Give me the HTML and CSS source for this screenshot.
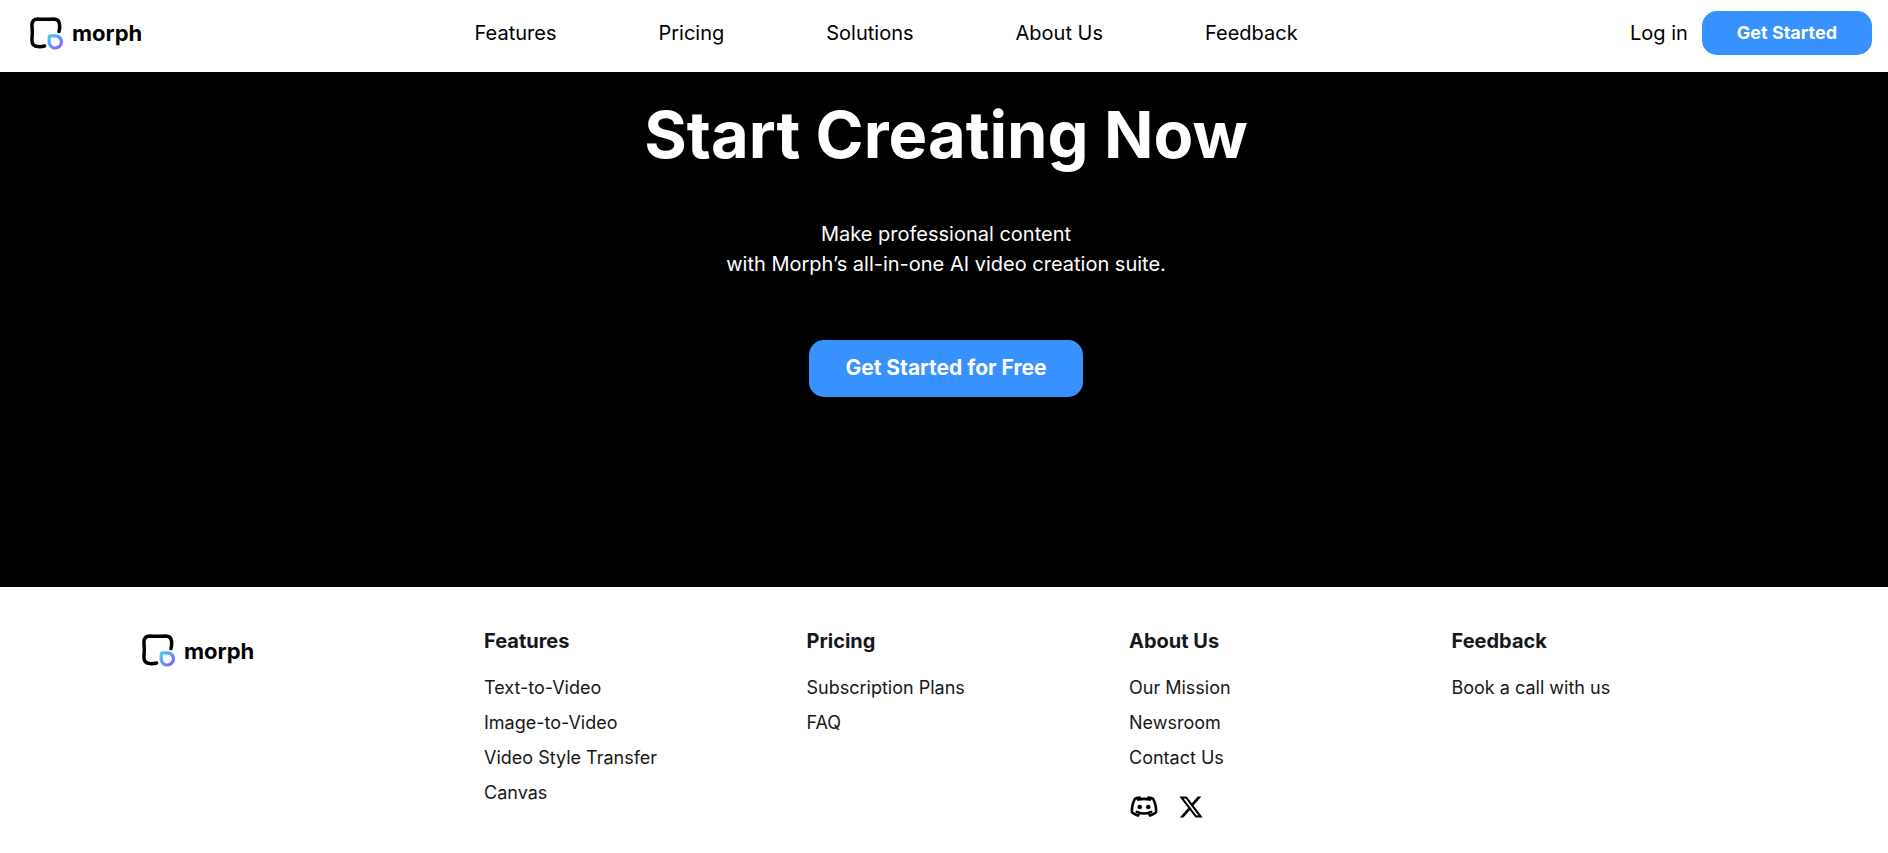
FILE: index.html
```html
<!DOCTYPE html>
<html lang="en">
<head>
<meta charset="utf-8">
<meta name="viewport" content="width=device-width, initial-scale=1">
<title>Morph</title>
<link rel="stylesheet" href="styles.css">
</head>
<body>
<header class="header">
  <a class="logo" href="#">
    <svg class="logo-mark" viewBox="0 0 33 33" aria-hidden="true">
      <defs>
        <linearGradient id="drop" x1="0" y1="0" x2="1" y2="1">
          <stop offset="0" stop-color="#3ccbff"/>
          <stop offset="1" stop-color="#8a5cff"/>
        </linearGradient>
      </defs>
      <path d="M29 14.5C30 11.5 29.8 9.5 29.6 7.5C29.3 3.6 27.4 1.9 23.5 1.9C18 2.3 13 2.3 8 1.9C3.9 1.9 2 3.8 1.9 8C2.500 13 2.500 18 1.9 23C2 27.3 4 29.6 8 29.6C10.500 29.800 12.500 29.600 14.500 29" fill="none" stroke="#000" stroke-width="3.500" stroke-linecap="round"/>
      <path d="M19.200 20.500Q19.200 18.800 21 18.800H25.200A6.100 6.100 0 1 1 19.200 25Z" fill="none" stroke="url(#drop)" stroke-width="3.200"/>
    </svg>
    <span>morph</span>
  </a>
  <nav class="nav">
    <a href="#">Features</a>
    <a href="#">Pricing</a>
    <a href="#">Solutions</a>
    <a href="#">About Us</a>
    <a href="#">Feedback</a>
  </nav>
  <div class="account">
    <a href="#">Log in</a>
    <button class="btn" type="button">Get Started</button>
  </div>
</header>
<main class="hero">
  <h1>Start Creating Now</h1>
  <p>Make professional content<br>with Morph’s all-in-one AI video creation suite.</p>
  <button class="btn btn-large" type="button">Get Started for Free</button>
</main>
<footer class="footer">
  <div>
    <a class="logo" href="#">
      <svg class="logo-mark" viewBox="0 0 33 33" aria-hidden="true">
        <path d="M29 14.5C30 11.5 29.8 9.5 29.6 7.5C29.3 3.6 27.4 1.9 23.5 1.9C18 2.3 13 2.3 8 1.9C3.9 1.9 2 3.8 1.9 8C2.500 13 2.500 18 1.9 23C2 27.3 4 29.6 8 29.6C10.500 29.800 12.500 29.600 14.500 29" fill="none" stroke="#000" stroke-width="3.500" stroke-linecap="round"/>
        <path d="M19.200 20.500Q19.200 18.800 21 18.800H25.200A6.100 6.100 0 1 1 19.200 25Z" fill="none" stroke="url(#drop)" stroke-width="3.200"/>
      </svg>
      <span>morph</span>
    </a>
  </div>
  <section>
    <h2>Features</h2>
    <ul>
      <li><a href="#">Text-to-Video</a></li>
      <li><a href="#">Image-to-Video</a></li>
      <li><a href="#">Video Style Transfer</a></li>
      <li><a href="#">Canvas</a></li>
    </ul>
  </section>
  <section>
    <h2>Pricing</h2>
    <ul>
      <li><a href="#">Subscription Plans</a></li>
      <li><a href="#">FAQ</a></li>
    </ul>
  </section>
  <section>
    <h2>About Us</h2>
    <ul>
      <li><a href="#">Our Mission</a></li>
      <li><a href="#">Newsroom</a></li>
      <li><a href="#">Contact Us</a></li>
    </ul>
    <div class="social">
      <a href="#" aria-label="Discord">
        <svg class="discord" viewBox="0 0 28 22" aria-hidden="true">
          <path d="M10.500 2.800L9.500 1.500C7.800 1.700 6.200 2.200 4.800 3C2.700 7 1.700 11.500 1.900 16.300C3.700 17.900 5.700 19 7.900 19.600L9.400 16.800M17.500 2.800L18.500 1.500C20.200 1.700 21.800 2.200 23.200 3C25.300 7 26.300 11.500 26.100 16.300C24.300 17.900 22.300 19 20.100 19.600L18.600 16.800M8.200 3.600C12 2.700 16 2.700 19.800 3.600M6.800 15.800C11.300 18 16.700 18 21.200 15.800" fill="none" stroke="#000" stroke-width="2.600" stroke-linecap="round" stroke-linejoin="round"/>
          <circle cx="9.700" cy="11" r="2.300"/>
          <circle cx="18.300" cy="11" r="2.300"/>
        </svg>
      </a>
      <a href="#" aria-label="X">
        <svg class="x-icon" viewBox="0 0 24 24" aria-hidden="true">
          <path d="M18.244 2.250h3.308l-7.227 8.260 8.502 11.240H16.170l-5.214-6.817L4.990 21.750H1.680l7.730-8.835L1.254 2.250H8.080l4.713 6.231zm-1.161 17.520h1.833L7.084 4.126H5.117z"/>
        </svg>
      </a>
    </div>
  </section>
  <section>
    <h2>Feedback</h2>
    <ul>
      <li><a href="#">Book a call with us</a></li>
    </ul>
  </section>
</footer>
</body>
</html>
```
FILE: styles.css
```css
* {
  box-sizing: border-box;
}

body {
  margin: 0;
  background: #fff;
  color: #000;
  font-family: Inter, "Liberation Sans", sans-serif;
  font-size: 20px;
  line-height: 30px;
}

a {
  color: inherit;
  text-decoration: none;
}

.header {
  display: flex;
  align-items: center;
  justify-content: space-between;
  min-height: 72px;
  padding: 0 16px 6px 30px;
}

.logo {
  display: inline-flex;
  align-items: center;
  gap: 9px;
  font-size: 22px;
  font-weight: 700;
}

.logo-mark {
  width: 33px;
  height: 33px;
}

.nav {
  display: flex;
  gap: 102px;
}

.account {
  display: flex;
  align-items: center;
  gap: 14px;
}

.btn {
  padding: 10px 35px;
  border: 0;
  border-radius: 15px;
  background: #3792ff;
  color: #fff;
  font: 700 18px/24px Inter, "Liberation Sans", sans-serif;
  cursor: pointer;
}

.hero {
  display: flex;
  flex-direction: column;
  align-items: center;
  padding: 23px 20px 190px 24px;
  background: #000;
  color: #fff;
  text-align: center;
}

.hero h1 {
  margin: 0 0 44px;
  font-size: 65px;
  line-height: 80px;
  font-weight: 700;
}

.hero p {
  margin: 0 0 61px;
}

.btn-large {
  padding: 13px 36px 14px;
  font-size: 21px;
  line-height: 30px;
}

.footer {
  display: grid;
  grid-template-columns: 342px repeat(4, 1fr);
  padding: 39px 114px 24px 142px;
  color: #161618;
}

.footer .logo {
  padding-top: 8px;
  color: #000;
}

.footer h2 {
  margin: 0 0 14px;
  font-size: 20px;
  line-height: 30px;
  font-weight: 700;
}

.footer ul {
  margin: 0;
  padding: 0;
  list-style: none;
}

.footer li {
  font-size: 18px;
  line-height: 35px;
}

.social {
  display: flex;
  align-items: center;
  gap: 20px;
  padding: 19px 0 0 1px;
}

.social a {
  display: flex;
}

.discord {
  width: 28px;
  height: 22px;
}

.x-icon {
  width: 26px;
  height: 26px;
}
```
